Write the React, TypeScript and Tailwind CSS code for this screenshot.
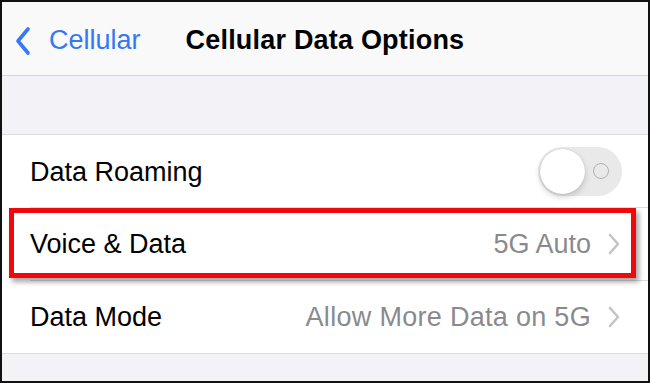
import React from "react";

const Chevron = () => (
  <svg width="12" height="22" viewBox="0 0 12 22" className="ml-[17px]">
    <path d="M2 2 L10 11 L2 20" fill="none" stroke="#c4c4c7" strokeWidth="2.6" strokeLinecap="round" strokeLinejoin="round" />
  </svg>
);

export default function App() {
  return (
    <div className="w-[650px] h-[383px] box-border border-2 border-[#111] bg-[#f2f2f7] overflow-hidden flex flex-col" style={{ fontFamily: '"Liberation Sans", Arial, sans-serif' }}>
      {/* Nav bar */}
      <div className="h-[74px] shrink-0 bg-[#f9f9f9] border-b border-[#d4d4d8] flex items-center pt-[4px]">
        <div className="flex items-center pl-[13px] text-[#3478f6]">
          <svg width="16" height="30" viewBox="0 0 16 30">
            <path d="M13 3 L3 15 L13 27" fill="none" stroke="#3478f6" strokeWidth="3.6" strokeLinecap="round" strokeLinejoin="round" />
          </svg>
          <span className="ml-[18px] text-[27px] leading-none">Cellular</span>
        </div>
        <span className="ml-[45px] text-[27px] font-bold text-black leading-none tracking-[0.2px]">Cellular Data Options</span>
      </div>
      {/* gray gap */}
      <div className="h-[59px] shrink-0 bg-[#f2f2f7] border-b border-[#dcdce0]" />
      {/* list */}
      <div className="bg-white shrink-0">
        <div className="h-[73px] flex items-center pl-[28px]">
          <div className="flex-1 h-full flex items-center border-b border-[#dcdce0] pr-[26px]">
            <span className="flex-1 text-[27px] text-black leading-none pt-[2px]">Data Roaming</span>
            <div className="relative w-[84px] h-[49px] rounded-full bg-[#e9e9ea] flex items-center">
              <div className="absolute right-[13px] w-[16px] h-[16px] rounded-full border-[1.8px] border-[#b0b0b3]" />
              <div className="absolute left-[2px] w-[45px] h-[45px] rounded-full bg-white shadow-[0_3px_6px_rgba(0,0,0,0.18),0_0_1px_rgba(0,0,0,0.2)]" />
            </div>
          </div>
        </div>
        <div className="relative h-[73px] flex items-center pl-[28px]">
          <div className="flex-1 h-full flex items-center border-b border-[#dcdce0] pr-[28px]">
            <span className="flex-1 text-[27px] text-black leading-none">Voice &amp; Data</span>
            <span className="text-[27px] text-[#8a8a8e] leading-none">5G Auto</span>
            <Chevron />
          </div>
          <div className="absolute left-[7px] top-[0px] w-[627px] h-[70px] border-[5px] border-[#ee0a0a] shadow-[3px_4px_5px_rgba(0,0,0,0.35)]" />
        </div>
        <div className="h-[72px] flex items-center pl-[28px] pr-[28px]">
          <span className="flex-1 text-[27px] text-black leading-none">Data Mode</span>
          <span className="text-[27px] text-[#8a8a8e] leading-none tracking-[0.3px]">Allow More Data on 5G</span>
          <Chevron />
        </div>
      </div>
      <div className="flex-1 bg-[#f2f2f7] border-t border-[#dcdce0]" />
    </div>
  );
}
